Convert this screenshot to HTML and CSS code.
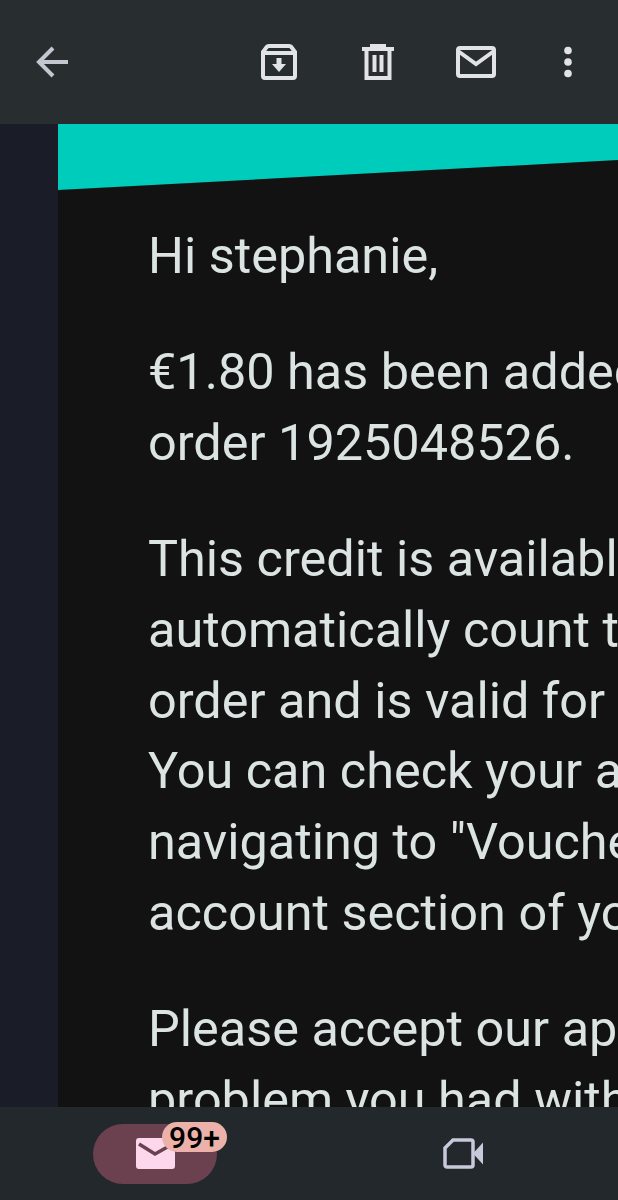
FILE: index.html
```html
<!DOCTYPE html>
<html lang="en">
<head>
  <meta charset="UTF-8">
  <title>Message</title>
  <link rel="stylesheet" href="styles.css">
</head>
<body>
  <div class="screen">
    <!-- Top bar -->
    <div class="topbar">
      <svg class="icon back" viewBox="0 0 32 32"><path d="M32 16H4M17 2 3 16l14 14"/></svg>
      <svg class="icon archive" viewBox="0 0 36 36"><path d="M8 2h20q2 0 3 2l3 4v24a2 2 0 0 1-2 2H4a2 2 0 0 1-2-2V8l3-4q1-2 3-2zM2 9h32"/><path class="solid" d="M15.500 14h5v6h4.500L18 28l-7-8h4.500z"/></svg>
      <svg class="icon trash" viewBox="0 0 32 36"><path d="M0 5h32M10 4V1.500h12V4M4.500 5v29h23V5M12.500 11v17M19.500 11v17"/></svg>
      <svg class="icon mail" viewBox="0 0 40 32"><rect x="2" y="2" width="36" height="28" rx="2"/><path d="m2 5 18 13L38 5"/></svg>
      <svg class="icon more" viewBox="0 0 10 32"><circle cx="5" cy="4.500" r="3.800"/><circle cx="5" cy="16" r="3.800"/><circle cx="5" cy="27.500" r="3.800"/></svg>
    </div>

    <!-- Message -->
    <div class="content">
      <div class="gutter"></div>
      <div class="email">
        <div class="banner"></div>
        <div class="body-text">
          <p>Hi stephanie,</p>
          <p>€1.80 has been added to your account for<br>order 1925048526.</p>
          <p>This credit is available to use and will<br>automatically count towards your next<br>order and is valid for 12 months.<br>You can check your account balance by<br>navigating to "Vouchers" in the<br>account section of your app.</p>
          <p>Please accept our apologies for the<br>problem you had with your order.</p>
        </div>
      </div>
    </div>

    <!-- Bottom nav -->
    <div class="bottombar">
      <div class="tab">
        <div class="pill">
          <svg class="mail-filled" viewBox="0 0 39 31"><path d="M3 0h33a3 3 0 0 1 3 3v25a3 3 0 0 1-3 3H3a3 3 0 0 1-3-3V3a3 3 0 0 1 3-3z"/><path class="flap" d="m3 6 16 10 16-9"/></svg>
          <span class="badge">99+</span>
        </div>
      </div>
      <div class="tab">
        <svg class="icon video" viewBox="0 0 40 31"><path d="M10 2h18a2 2 0 0 1 2 2v23a2 2 0 0 1-2 2H4a2 2 0 0 1-2-2V10z"/><path class="solid" d="m30 15.500 10-11v22z"/></svg>
      </div>
    </div>
  </div>
</body>
</html>
```

FILE: styles.css
```css
html, body {
  margin: 0;
  height: 100%;
}

body {
  font-family: 'Roboto', sans-serif;
  background: #121212;
  overflow: hidden;
}

.screen {
  display: flex;
  flex-direction: column;
  height: 1200px;
}

.topbar {
  height: 124px;
  flex: none;
  background: #282d30;
  display: flex;
  align-items: center;
}

.icon {
  fill: none;
  stroke: #e2e2e9;
  stroke-width: 4;
  flex: none;
}

.icon .solid {
  fill: #e2e2e9;
  stroke: none;
}

.back {
  width: 32px;
  height: 32px;
  margin-left: 36px;
  stroke: #c4c6d0;
}

.archive {
  width: 36px;
  height: 36px;
  margin-left: 193px;
}

.trash {
  width: 32px;
  height: 36px;
  margin-left: 65px;
}

.mail {
  width: 40px;
  height: 32px;
  margin-left: 62px;
}

.more {
  width: 10px;
  height: 32px;
  margin-left: 67px;
  fill: #e2e2e9;
  stroke: none;
}

.content {
  flex: 1;
  display: flex;
  min-height: 0;
  overflow: hidden;
}

.gutter {
  width: 58px;
  flex: none;
  background: #1a1d27;
}

.email {
  flex: 1;
  min-width: 0;
  background: #121212;
  overflow: hidden;
}

.banner {
  height: 66px;
  background: #00ccbb;
  clip-path: polygon(0 0, 100% 0, 100% 36px, 0 100%);
}

.body-text {
  padding: 31px 0 0 90px;
  color: #dbe4e2;
  font-size: 50.4px;
  line-height: 70.7px;
  white-space: nowrap;
}

.body-text p {
  margin: 0 0 45.5px;
}

.bottombar {
  height: 93px;
  flex: none;
  background: #22282b;
  display: flex;
}

.tab {
  width: 310px;
  display: flex;
  justify-content: center;
  align-items: center;
}

.tab + .tab {
  width: 306px;
}

.pill {
  position: relative;
  width: 124px;
  height: 60px;
  border-radius: 30px;
  background: #6b404f;
  display: flex;
  justify-content: center;
  align-items: center;
}

.mail-filled {
  width: 39px;
  height: 31px;
  fill: #fdd8ec;
}

.mail-filled .flap {
  fill: none;
  stroke: #6b404f;
  stroke-width: 3.500;
}

.badge {
  position: absolute;
  top: -2px;
  left: 69px;
  width: 65px;
  height: 30px;
  border-radius: 15px;
  background: #ecb2aa;
  color: #000;
  font-size: 30px;
  font-weight: 500;
  line-height: 31px;
  text-align: center;
}

.video {
  width: 40px;
  height: 31px;
  stroke: #c9c9dc;
  stroke-width: 3.500;
}

.video .solid {
  fill: #c9c9dc;
}
```
